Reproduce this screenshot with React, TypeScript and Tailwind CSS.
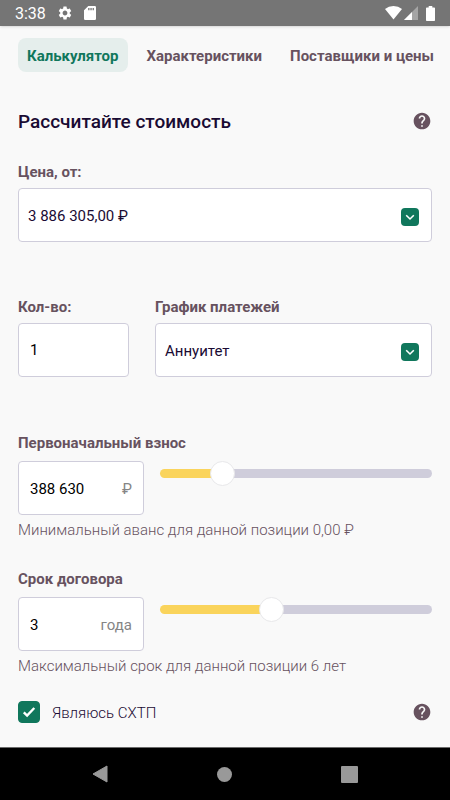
import { useState } from 'react';
import type { CSSProperties, ReactNode } from 'react';
import { MdHelp, MdSettings } from 'react-icons/md';

const tabs = ['Калькулятор', 'Характеристики', 'Поставщики и цены'];
const prices = ['3 886 305,00 ₽', '4 120 000,00 ₽'];
const schedules = ['Аннуитет', 'Равными долями', 'Сезонный'];

const MAX_ADVANCE = 1904289;
const THUMB = 25;

const formatNumber = (value: number) =>
  String(value).replace(/\B(?=(\d{3})+$)/g, ' ');

const StatusBar = () => (
  <header className="flex h-[26px] shrink-0 items-center justify-between bg-[#757575] px-[15px] text-white shadow-sm">
    <div className="flex items-center">
      <span className="pt-0.5 text-base leading-5">3:38</span>
      <MdSettings size={16} className="ml-[11px]" />
      <svg width="12" height="14" viewBox="0 0 12 14" className="ml-[11px]">
        <path
          fill="currentColor"
          fillRule="evenodd"
          d="M4.3 0H10.8Q12 0 12 1.2V12.8Q12 14 10.8 14H1.2Q0 14 0 12.8V4.3ZM4.2 2V4.2H5.5V2ZM6.4 2V4.2H7.7V2ZM8.6 2V4.2H9.9V2Z"
        />
      </svg>
    </div>
    <div className="flex items-center">
      <svg width="17" height="14" viewBox="0 0 17 14">
        <path fill="currentColor" d="M8.5 13.5L0 3Q3.6 0 8.5 0T17 3Z" />
      </svg>
      <svg width="14" height="14" viewBox="0 0 14 14" className="ml-[2px]">
        <path fill="currentColor" opacity="0.35" d="M14 0V14H0Z" />
        <path fill="currentColor" d="M8 6V14H0Z" />
      </svg>
      <svg width="9" height="15" viewBox="0 0 9 15" className="ml-2">
        <path
          fill="currentColor"
          d="M2.7 0H6.3V1.5H8.2Q9 1.5 9 2.3V14.2Q9 15 8.2 15H.8Q0 15 0 14.2V2.3Q0 1.5 .8 1.5H2.7Z"
        />
      </svg>
    </div>
  </header>
);

const FieldLabel = ({ id, children }: { id: string; children: ReactNode }) => (
  <label htmlFor={id} className="block text-[15px] leading-[22px] font-bold text-[#67525f]">
    {children}
  </label>
);

const HelpButton = ({ label }: { label: string }) => (
  <button type="button" aria-label={label} className="text-[#67525f]">
    <MdHelp size={20} />
  </button>
);

const SelectField = ({ id, options }: { id: string; options: string[] }) => (
  <div className="relative mt-[5px]">
    <select
      id={id}
      className="h-[54px] w-full appearance-none rounded-[4px] border border-[#cfcddb] bg-white pt-0.5 pr-10 pl-[9px] text-[15px] text-[#1a0b33]"
    >
      {options.map((option) => (
        <option key={option}>{option}</option>
      ))}
    </select>
    <span className="pointer-events-none absolute inset-y-0 right-[13px] flex items-center pt-1">
      <svg width="18" height="18" viewBox="0 0 18 18">
        <rect width="18" height="18" rx="4" fill="#10775c" />
        <path d="M5.2 7.3L9 11L12.8 7.3" fill="none" stroke="#fff" strokeWidth="1.6" />
      </svg>
    </span>
  </div>
);

interface SliderFieldProps {
  id: string;
  label: string;
  unit: string;
  hint: string;
  min: number;
  max: number;
  value: number;
  onChange: (value: number) => void;
}

const SliderField = ({ id, label, unit, hint, min, max, value, onChange }: SliderFieldProps) => {
  const share = (value - min) / (max - min);
  const stop = `calc(${THUMB / 2}px + (100% - ${THUMB}px) * ${share})`;
  const track: CSSProperties = {
    background: `linear-gradient(to right, #fad45c ${stop}, #cfcddb ${stop})`,
  };

  const handleText = (text: string) => {
    const next = Number(text.replace(/\D/g, ''));
    onChange(Math.min(max, Math.max(min, next)));
  };

  return (
    <div>
      <FieldLabel id={id}>{label}</FieldLabel>
      <div className="mt-[7px] flex items-start gap-4">
        <div className="flex h-[54px] w-[126px] shrink-0 items-center rounded-[4px] border border-[#cfcddb] bg-white px-[11px]">
          <input
            id={id}
            inputMode="numeric"
            value={formatNumber(value)}
            onChange={(e) => handleText(e.target.value)}
            className="w-0 min-w-0 flex-1 pt-0.5 text-[15px] text-black outline-none"
          />
          <span className="pt-0.5 text-[15px] text-[#858585]">{unit}</span>
        </div>
        <div className="flex min-w-0 flex-1 pt-2">
          <input
            type="range"
            aria-label={label}
            min={min}
            max={max}
            value={value}
            onChange={(e) => onChange(Number(e.target.value))}
            style={track}
            className="h-[9px] w-full appearance-none rounded-full [&::-webkit-slider-thumb]:size-[25px] [&::-webkit-slider-thumb]:appearance-none [&::-webkit-slider-thumb]:rounded-full [&::-webkit-slider-thumb]:border [&::-webkit-slider-thumb]:border-[#e8e8ea] [&::-webkit-slider-thumb]:bg-white"
          />
        </div>
      </div>
      <p className="mt-1 text-[15px] leading-[22px] font-light text-[#67525f]">{hint}</p>
    </div>
  );
};

const App = () => {
  const [activeTab, setActiveTab] = useState(tabs[0]);
  const [quantity, setQuantity] = useState('1');
  const [advance, setAdvance] = useState(388630);
  const [years, setYears] = useState(3);
  const [isFarmer, setIsFarmer] = useState(true);

  return (
    <div className="flex min-h-screen flex-col bg-[#f9f9f9] font-['Roboto',sans-serif]">
      <StatusBar />

      <nav className="flex shrink-0 gap-[10px] overflow-x-auto pt-3 pl-[18px] [scrollbar-width:none]">
        {tabs.map((tab) => (
          <button
            key={tab}
            type="button"
            onClick={() => setActiveTab(tab)}
            className={`h-[34px] shrink-0 rounded-[8px] px-[9px] pt-0.5 text-[15px] font-bold whitespace-nowrap ${
              tab === activeTab ? 'bg-[#e5eeec] text-[#10775c]' : 'text-[#67525f]'
            }`}
          >
            {tab}
          </button>
        ))}
      </nav>

      <main className="flex-1 px-[18px] pt-9 pb-6">
        <div className="flex items-center justify-between">
          <h1 className="pt-0.5 text-[19px] leading-6 font-medium text-[#1a0b33]">Рассчитайте стоимость</h1>
          <HelpButton label="Справка о расчёте" />
        </div>

        <div className="mt-[27px]">
          <FieldLabel id="price">Цена, от:</FieldLabel>
          <SelectField id="price" options={prices} />
        </div>

        <div className="mt-[54px] flex gap-[26px]">
          <div className="w-[111px] shrink-0">
            <FieldLabel id="quantity">Кол-во:</FieldLabel>
            <input
              id="quantity"
              inputMode="numeric"
              value={quantity}
              onChange={(e) => setQuantity(e.target.value)}
              className="mt-[5px] h-[54px] w-full rounded-[4px] border border-[#cfcddb] bg-white px-[11px] text-[15px] text-black"
            />
          </div>
          <div className="min-w-0 flex-1">
            <FieldLabel id="schedule">График платежей</FieldLabel>
            <SelectField id="schedule" options={schedules} />
          </div>
        </div>

        <div className="mt-[55px] flex flex-col gap-[27px]">
          <SliderField
            id="advance"
            label="Первоначальный взнос"
            unit="₽"
            hint="Минимальный аванс для данной позиции 0,00 ₽"
            min={0}
            max={MAX_ADVANCE}
            value={advance}
            onChange={setAdvance}
          />
          <SliderField
            id="term"
            label="Срок договора"
            unit="года"
            hint="Максимальный срок для данной позиции 6 лет"
            min={1}
            max={6}
            value={years}
            onChange={setYears}
          />
        </div>

        <div className="mt-6 flex items-center justify-between">
          <label className="flex items-center gap-3 text-[15px] leading-5 font-light text-[#1a0b33]">
            <span className="relative flex">
              <input
                type="checkbox"
                checked={isFarmer}
                onChange={(e) => setIsFarmer(e.target.checked)}
                className="size-[22px] appearance-none rounded-[4px] border border-[#10775c] bg-white checked:bg-[#10775c]"
              />
              {isFarmer && (
                <svg viewBox="0 0 22 22" className="pointer-events-none absolute inset-0 size-full">
                  <path d="M5.8 11.3L9.1 14.5L16.3 7" fill="none" stroke="#fff" strokeWidth="2.4" />
                </svg>
              )}
            </span>
            <span className="pt-0.5">Являюсь СХТП</span>
          </label>
          <HelpButton label="Справка о СХТП" />
        </div>
      </main>

      <footer className="flex h-[53px] shrink-0 items-center justify-around border-t border-[#6b6b6b] bg-black px-[37px] text-[#999999]">
        <button type="button" aria-label="Назад">
          <svg width="16" height="18" viewBox="0 0 16 18">
            <path d="M15 1V17L1 9Z" fill="currentColor" stroke="currentColor" strokeLinejoin="round" />
          </svg>
        </button>
        <button type="button" aria-label="Домой" className="size-[15px] rounded-full bg-[#999999]" />
        <button type="button" aria-label="Недавние" className="size-[17px] rounded-[1px] bg-[#999999]" />
      </footer>
    </div>
  );
};

export default App;
